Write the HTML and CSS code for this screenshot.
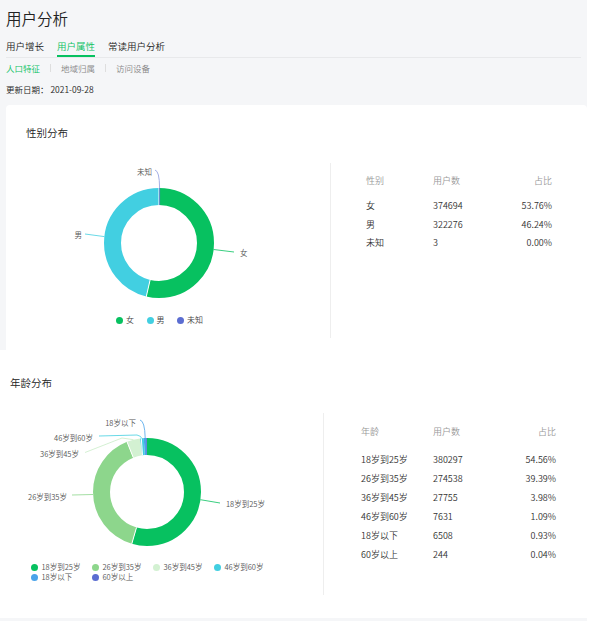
FILE: index.html
```html
<!DOCTYPE html>
<html lang="zh-CN">
<head>
<meta charset="utf-8">
<title>用户分析</title>
<link rel="stylesheet" href="styles.css">
</head>
<body>
<div class="app">
  <div class="header">
    <h1 class="title">用户分析</h1>
    <div class="tabs">
      <span class="tab">用户增长</span>
      <span class="tab tab-active">用户属性</span>
      <span class="tab">常读用户分析</span>
    </div>
    <div class="subtabs">
      <span class="sub sub-active">人口特征</span>
      <span class="sep"></span>
      <span class="sub">地域归属</span>
      <span class="sep"></span>
      <span class="sub">访问设备</span>
    </div>
    <div class="date">更新日期：&nbsp;2021-09-28</div>
  </div>

  <section class="card card-gender">
    <h2 class="card-title">性别分布</h2>
    <div class="card-body body-gender">
      <div class="chart-col chart-gender">
        <svg class="chart-svg" width="324" height="150" viewBox="0 0 324 150">
          <g transform="rotate(-90 153 83)" fill="none" stroke-width="17">
            <circle cx="153" cy="83" r="46.5" pathLength="100" stroke="#07c160" stroke-dasharray="53.76 100" stroke-dashoffset="0"/>
            <circle cx="153" cy="83" r="46.5" pathLength="100" stroke="#42cfe1" stroke-dasharray="46.24 100" stroke-dashoffset="-53.76"/>
          </g>
          <g stroke="#fff" stroke-width="1">
            <line x1="153" y1="45" x2="153" y2="27"/>
            <line x1="144.1" y1="120" x2="140.2" y2="137"/>
          </g>
          <line x1="153.6" y1="45" x2="153.6" y2="28" stroke="#5b6dd1" stroke-width="0.8"/>
          <g fill="none" stroke-width="0.8">
            <path d="M207.6 89.5 L228 92" stroke="#07c160"/>
            <path d="M98.4 76.6 L79 74" stroke="#42cfe1"/>
            <path d="M149 10 Q153.5 11 153.6 28" stroke="#8e9be0"/>
          </g>
          <g class="lbl">
            <text x="234" y="96">女</text>
            <text x="76" y="78" text-anchor="end">男</text>
            <text x="146" y="15" text-anchor="end">未知</text>
          </g>
        </svg>
        <div class="legend legend-gender">
          <span class="lg"><i class="dot c-green"></i>女</span>
          <span class="lg"><i class="dot c-cyan"></i>男</span>
          <span class="lg"><i class="dot c-purple"></i>未知</span>
        </div>
      </div>
      <div class="table-col table-gender">
        <div class="trow thead"><span class="c1">性别</span><span class="c2">用户数</span><span class="c3">占比</span></div>
        <div class="tbody">
          <div class="trow"><span class="c1">女</span><span class="c2">374694</span><span class="c3">53.76%</span></div>
          <div class="trow"><span class="c1">男</span><span class="c2">322276</span><span class="c3">46.24%</span></div>
          <div class="trow"><span class="c1">未知</span><span class="c2">3</span><span class="c3">0.00%</span></div>
        </div>
      </div>
    </div>
  </section>

  <section class="card card-age">
    <h2 class="card-title">年龄分布</h2>
    <div class="card-body body-age">
      <div class="chart-col chart-age">
        <svg class="chart-svg" width="323" height="152" viewBox="0 0 323 152">
          <g transform="rotate(-90 147 82)" fill="none" stroke-width="17">
            <circle cx="147" cy="82" r="45.5" pathLength="100" stroke="#07c160" stroke-dasharray="54.56 100" stroke-dashoffset="0"/>
            <circle cx="147" cy="82" r="45.5" pathLength="100" stroke="#8dd68c" stroke-dasharray="39.39 100" stroke-dashoffset="-54.56"/>
            <circle cx="147" cy="82" r="45.5" pathLength="100" stroke="#d3f1d2" stroke-dasharray="3.98 100" stroke-dashoffset="-93.95"/>
            <circle cx="147" cy="82" r="45.5" pathLength="100" stroke="#42cfe1" stroke-dasharray="1.09 100" stroke-dashoffset="-97.93"/>
            <circle cx="147" cy="82" r="45.5" pathLength="100" stroke="#4aa3ea" stroke-dasharray="0.93 100" stroke-dashoffset="-99.02"/>
            <circle cx="147" cy="82" r="45.5" pathLength="100" stroke="#5b6dd1" stroke-dasharray="0.2 100" stroke-dashoffset="-99.8"/>
          </g>
          <g stroke="#fff" stroke-width="1">
            <line x1="136.5" y1="117.5" x2="131.6" y2="134.5"/>
            <line x1="133.3" y1="47.6" x2="126.9" y2="31.5"/>
            <line x1="142.5" y1="45.3" x2="141.3" y2="28"/>
          </g>
          <g fill="none" stroke-width="0.8">
            <path d="M200.4 89.7 L220 93" stroke="#07c160"/>
            <path d="M93 84.5 L72 85" stroke="#8dd68c"/>
            <path d="M133.4 29.7 L122 28 L85 42.5" stroke="#c9ecc8"/>
            <path d="M99 26 L137 25 Q141.5 26 141.8 28.5" stroke="#42cfe1"/>
            <path d="M140 10 Q144.8 11 145.2 28" stroke="#4aa3ea"/>
          </g>
          <g class="lbl">
            <text x="226" y="97">18岁到25岁</text>
            <text x="67" y="90" text-anchor="end">26岁到35岁</text>
            <text x="79" y="47" text-anchor="end">36岁到45岁</text>
            <text x="93" y="31" text-anchor="end">46岁到60岁</text>
            <text x="136" y="16" text-anchor="end">18岁以下</text>
          </g>
        </svg>
        <div class="legend legend-age">
          <span class="lg"><i class="dot c-green"></i>18岁到25岁</span>
          <span class="lg"><i class="dot c-lgreen"></i>26岁到35岁</span>
          <span class="lg"><i class="dot c-pale"></i>36岁到45岁</span>
          <span class="lg"><i class="dot c-cyan"></i>46岁到60岁</span>
          <span class="lg"><i class="dot c-blue"></i>18岁以下</span>
          <span class="lg"><i class="dot c-purple"></i>60岁以上</span>
        </div>
      </div>
      <div class="table-col table-age">
        <div class="trow thead"><span class="c1">年龄</span><span class="c2">用户数</span><span class="c3">占比</span></div>
        <div class="tbody">
          <div class="trow"><span class="c1">18岁到25岁</span><span class="c2">380297</span><span class="c3">54.56%</span></div>
          <div class="trow"><span class="c1">26岁到35岁</span><span class="c2">274538</span><span class="c3">39.39%</span></div>
          <div class="trow"><span class="c1">36岁到45岁</span><span class="c2">27755</span><span class="c3">3.98%</span></div>
          <div class="trow"><span class="c1">46岁到60岁</span><span class="c2">7631</span><span class="c3">1.09%</span></div>
          <div class="trow"><span class="c1">18岁以下</span><span class="c2">6508</span><span class="c3">0.93%</span></div>
          <div class="trow"><span class="c1">60岁以上</span><span class="c2">244</span><span class="c3">0.04%</span></div>
        </div>
      </div>
    </div>
  </section>
</div>
</body>
</html>
```

FILE: styles.css
```css
* { box-sizing: border-box; }

body {
  margin: 0;
  background: #fff;
  font-family: "Noto Sans CJK SC", "Noto Sans", sans-serif;
  font-weight: 350;
  color: #333;
}

.app {
  width: 587px;
  background: #f5f6f8;
  padding-bottom: 3px;
}

.header {
  padding: 7px 6px 0;
}

.title {
  margin: 0;
  font-size: 15.5px;
  line-height: 22px;
  font-weight: 350;
  color: #222;
}

.tabs {
  display: flex;
  gap: 13px;
  margin-top: 10px;
  border-bottom: 1px solid #e8e9eb;
}

.tab {
  font-size: 9.5px;
  line-height: 14px;
  padding-bottom: 2px;
  border-bottom: 2px solid transparent;
  color: #222;
}

.tab-active {
  color: #07c160;
  border-bottom-color: #07c160;
}

.subtabs {
  display: flex;
  align-items: center;
  margin-top: 4px;
  font-size: 8.5px;
  line-height: 12px;
  color: #888;
}

.sub-active { color: #07c160; }

.sep {
  width: 1px;
  height: 8px;
  background: #dedede;
  margin: 0 10px;
}

.date {
  margin-top: 9px;
  margin-bottom: 10px;
  font-size: 8.5px;
  line-height: 12px;
  color: #222;
}

.card {
  background: #fff;
}

.card-gender {
  margin-left: 6px;
  border-radius: 4px 4px 0 0;
  padding: 21px 0 12px;
}

.card-age {
  padding: 26px 0 23px;
}

.card-title {
  margin: 0;
  font-size: 10.5px;
  line-height: 14px;
  font-weight: 350;
  color: #222;
}

.card-gender .card-title { margin-left: 20px; }
.card-age .card-title { margin-left: 10px; }

.card-body {
  display: flex;
  margin-top: 20px;
}

.body-gender { height: 178px; }
.body-age { height: 185px; }

.chart-gender { width: 324px; }
.chart-age { width: 323px; }

.chart-svg { display: block; }

.lbl text {
  font-size: 7.5px;
  fill: #555;
  font-family: "Noto Sans CJK SC", "Noto Sans", sans-serif;
  font-weight: 350;
}

.legend {
  color: #444;
}

.legend-gender {
  display: flex;
  gap: 12.5px;
  margin: 4px 0 0 110px;
  font-size: 8px;
  line-height: 12px;
}

.legend-age {
  display: grid;
  grid-template-columns: repeat(4, 61px);
  margin-left: 31px;
  font-size: 7.5px;
  line-height: 10px;
  color: #555;
}

.lg {
  display: flex;
  align-items: center;
  gap: 3px;
  white-space: nowrap;
}

.legend-age .lg { gap: 3.5px; }

.dot {
  display: block;
  width: 7px;
  height: 7px;
  border-radius: 50%;
}

.c-green { background: #07c160; }
.c-cyan { background: #42cfe1; }
.c-purple { background: #5b6dd1; }
.c-lgreen { background: #8dd68c; }
.c-pale { background: #d3f1d2; }
.c-blue { background: #4aa3ea; }

.table-col {
  flex: 1;
  margin-top: 3px;
  border-left: 1px solid #eeeeee;
  font-size: 9px;
}

.table-gender { padding: 11px 35px 0 35px; }
.table-age { padding: 12px 31px 0 37px; }

.trow {
  display: flex;
  color: #333;
}

.thead {
  line-height: 14px;
  color: #999;
}

.table-gender .tbody { margin-top: 9px; }
.table-gender .tbody .trow { line-height: 18.5px; }

.table-age .tbody { margin-top: 10.5px; }
.table-age .tbody .trow { line-height: 19px; }

.c1 { flex: none; }
.table-gender .c1 { width: 67px; }
.table-age .c1 { width: 72px; }
.c2 { flex: 1; }
.c3 { text-align: right; }
```
